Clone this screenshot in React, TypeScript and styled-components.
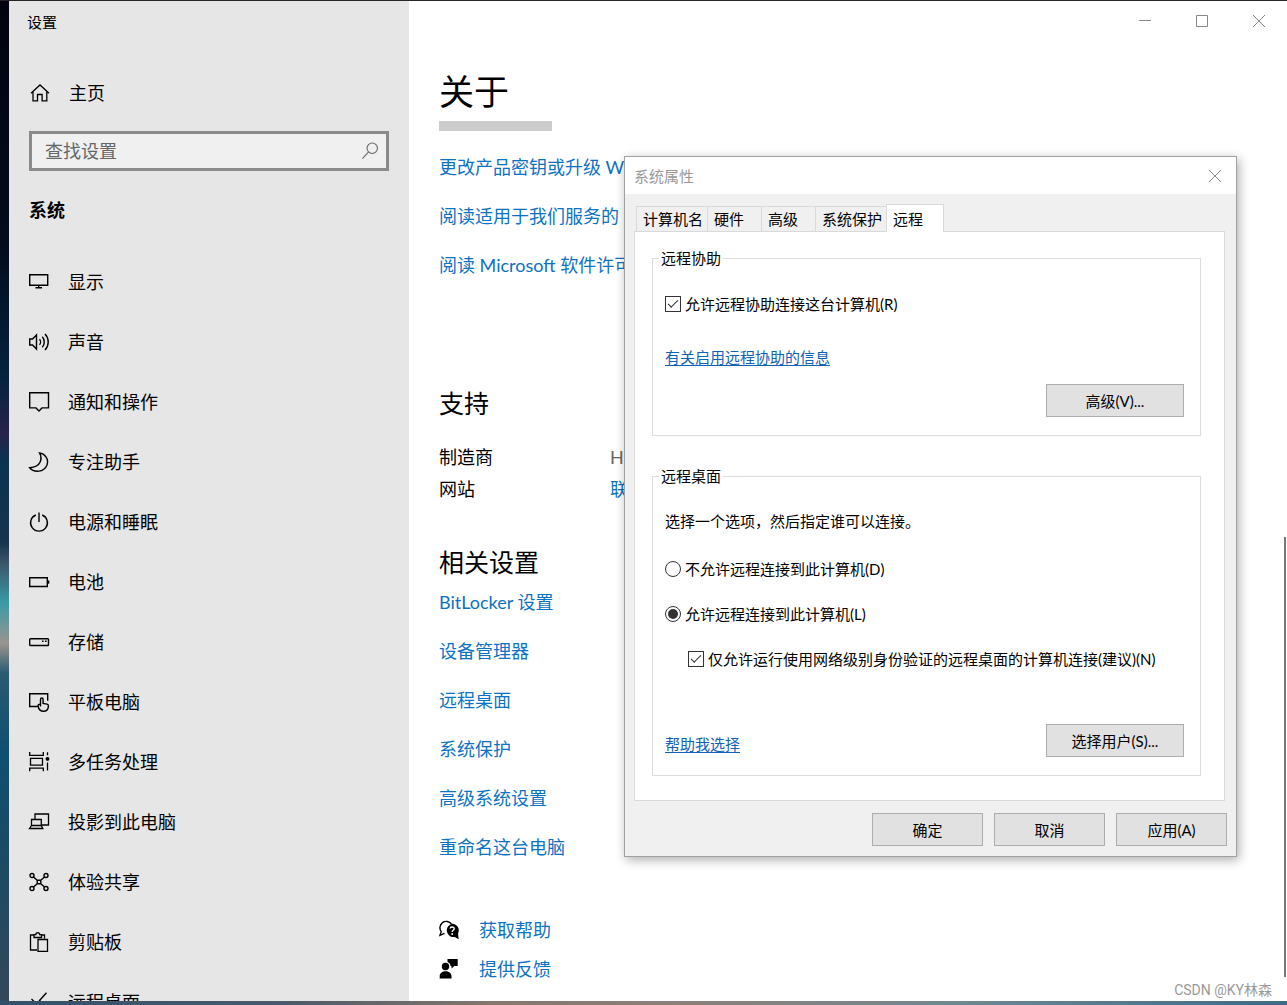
import React, { useId, useState } from "react";
import styled, { createGlobalStyle } from "styled-components";

const GlobalStyle = createGlobalStyle`
  *, *::before, *::after { box-sizing: border-box; }
  body {
    margin: 0;
    overflow: hidden;
    font-family: Lato, "Noto Sans CJK SC", sans-serif;
    color: #000;
  }
  button, input { font: inherit; color: inherit; }
  h1, h2, p, ul, dl, dd { margin: 0; padding: 0; }
  a { color: #0b72c4; text-decoration: none; }
`;

const Desktop = styled.div`
  position: relative;
  height: 100vh;
  padding: 1px 0 4px 9px;
  background:
    linear-gradient(90deg, #34506a 0%, #4a5a6a 22%, #86766c 38%, #8d8078 52%, #6f8790 75%, #3d6b88 100%) left bottom / 100% 4px no-repeat,
    linear-gradient(#2a2428, #2a2428) left top / 100% 1px no-repeat,
    linear-gradient(180deg, #02030f 0%, #020c1c 24%, #06233f 38%, #28234a 43%, #0b3350 46%, #17334d 54%, #3c5568 56%, #3a9aa5 60%, #9a9490 64%, #2a5a70 67%, #0f4f70 75%, #1d4a63 86%, #34475a 100%);
`;

const SettingsWindow = styled.div`
  display: flex;
  height: 100%;
  background: #fff;
  overflow: hidden;
`;

const Sidebar = styled.aside`
  flex: none;
  width: 400px;
  padding: 0 20px;
  background: #e6e6e6;
  overflow: hidden;
`;

const AppName = styled.p`
  height: 40px;
  margin-left: -2px;
  padding-top: 1px;
  font-size: 15px;
  line-height: 40px;
`;

const NavLink = styled.a<{ $home?: boolean }>`
  display: flex;
  align-items: center;
  gap: ${(p) => (p.$home ? 20 : 19)}px;
  height: ${(p) => (p.$home ? 48 : 60)}px;
  font-size: 18px;
  line-height: 24px;
  color: #000;
  svg { flex: none; width: 20px; height: 20px; overflow: visible; }
`;

const HomeRow = styled.div`
  padding-top: 28px;
`;

const SearchBox = styled.label`
  display: flex;
  align-items: center;
  height: 40px;
  margin-top: 14px;
  padding: 0 7px 0 13px;
  border: 3px solid #8a8a8a;
  background: #f0f0f0;
  color: #666;
  svg { width: 18px; height: 18px; }
`;

const SearchInput = styled.input`
  flex: 1;
  min-width: 0;
  padding: 0;
  border: 0;
  outline: 0;
  background: transparent;
  font-size: 18px;
  line-height: 24px;
  &::placeholder { color: #666; opacity: 1; }
`;

const Section = styled.h2`
  padding: 26px 0 29px;
  font-size: 18px;
  line-height: 26px;
  font-weight: 700;
`;

const NavList = styled.ul`
  list-style: none;
`;

const Main = styled.main`
  flex: 1;
  min-width: 0;
  display: flex;
  flex-direction: column;
`;

const Caption = styled.div`
  display: flex;
  justify-content: flex-end;
  height: 40px;
`;

const CaptionButton = styled.button`
  display: grid;
  place-items: center;
  width: 57px;
  padding: 0;
  border: 0;
  background: transparent;
  color: #888;
`;

const Page = styled.div`
  padding: 25px 30px 0;
`;

const Title = styled.h1`
  font-size: 35px;
  line-height: 50px;
  font-weight: 400;
`;

const RedactedBar = styled.div`
  width: 113px;
  height: 10px;
  margin-top: 5px;
  background: #ccc;
`;

const LinkList = styled.ul<{ $top: number }>`
  list-style: none;
  display: grid;
  gap: 25px;
  padding-top: ${(p) => p.$top}px;
  font-size: 18px;
  line-height: 24px;
  white-space: nowrap;
`;

const Heading = styled.h2<{ $top: number }>`
  padding-top: ${(p) => p.$top}px;
  font-size: 25px;
  line-height: 36px;
  font-weight: 400;
`;

const Facts = styled.dl`
  display: grid;
  grid-template-columns: 171px 1fr;
  row-gap: 8px;
  padding-top: 24px;
  font-size: 18px;
  line-height: 24px;
  dd { color: #666; }
`;

const HelpList = styled.ul`
  list-style: none;
  display: grid;
  gap: 15px;
  padding-top: 59px;
  font-size: 18px;
  line-height: 24px;
`;

const HelpLink = styled.a`
  display: flex;
  align-items: center;
  gap: 20px;
  svg { width: 20px; height: 20px; color: #000; }
`;

const ScrollThumb = styled.div`
  position: absolute;
  right: 1px;
  top: 537px;
  bottom: 28px;
  width: 2px;
  background: #777;
`;

const Watermark = styled.p`
  position: absolute;
  right: 15px;
  bottom: 5px;
  font-family: Roboto, "Noto Sans CJK SC", sans-serif;
  font-size: 14px;
  line-height: 20px;
  color: #999;
`;

const Dialog = styled.section`
  position: absolute;
  left: 624px;
  top: 156px;
  width: 613px;
  border: 1px solid #a0a0a0;
  background: #f0f0f0;
  box-shadow: 2px 3px 10px rgba(0, 0, 0, 0.32);
  font-size: 15px;
  line-height: 20px;
`;

const DialogTitle = styled.header`
  display: flex;
  justify-content: space-between;
  align-items: center;
  height: 37px;
  padding-left: 9px;
  background: #fff;
  color: #999;
`;

const CloseButton = styled.button`
  display: grid;
  place-items: center;
  width: 42px;
  height: 36px;
  padding: 0;
  border: 0;
  background: transparent;
  color: #888;
`;

const DialogBody = styled.div`
  padding: 10px 11px 10px 9px;
`;

const Tabs = styled.div`
  display: flex;
  align-items: flex-end;
  height: 27px;
  padding-left: 2px;
`;

const Tab = styled.button<{ $width: number }>`
  width: ${(p) => p.$width}px;
  height: 25px;
  padding: 0 0 0 6px;
  border: 1px solid #d9d9d9;
  border-width: 1px 0 0 1px;
  background: #f0f0f0;
  text-align: left;
  line-height: 24px;
  white-space: nowrap;
  &[aria-selected="true"] {
    position: relative;
    height: 28px;
    margin-bottom: -1px;
    border-right-width: 1px;
    background: #fff;
  }
`;

const TabPanel = styled.div`
  display: grid;
  gap: 30px;
  padding: 16px 23px 24px 17px;
  border: 1px solid #d9d9d9;
  background: #fff;
`;

const Group = styled.fieldset`
  min-width: 0;
  margin: 0;
  padding: 0 16px 18px 12px;
  border: 1px solid #dcdcdc;
`;

const Legend = styled.legend`
  margin-left: -6px;
  padding: 0 2px;
`;

const Option = styled.label<{ $top: number; $indent?: boolean }>`
  display: flex;
  align-items: center;
  gap: 4px;
  margin-top: ${(p) => p.$top}px;
  margin-left: ${(p) => (p.$indent ? 23 : 0)}px;
  white-space: nowrap;
`;

const Check = styled.input`
  appearance: none;
  flex: none;
  width: 16px;
  height: 16px;
  margin: 0;
  border: 1px solid #333;
  background: #fff;
  display: grid;
  place-items: center;
  &:checked::after {
    content: "";
    width: 10px;
    height: 5px;
    margin-bottom: 3px;
    border: solid #333;
    border-width: 0 0 1px 1px;
    transform: rotate(-45deg);
  }
`;

const Radio = styled.input`
  appearance: none;
  flex: none;
  width: 16px;
  height: 16px;
  margin: 0;
  border: 1px solid #333;
  border-radius: 50%;
  background: #fff;
  display: grid;
  place-items: center;
  &:checked::after {
    content: "";
    width: 10px;
    height: 10px;
    border-radius: 50%;
    background: #333;
  }
`;

const InfoLink = styled.a`
  color: #0f62b8;
  text-decoration: underline;
  text-underline-offset: 2px;
`;

const LinkLine = styled.p`
  margin-top: 33px;
`;

const Prompt = styled.p`
  margin-top: 25px;
`;

const PushButton = styled.button<{ $wide?: boolean }>`
  width: ${(p) => (p.$wide ? 138 : 111)}px;
  height: 33px;
  padding: 0;
  border: 1px solid #adadad;
  background: #e1e1e1;
`;

const ActionRow = styled.div<{ $top: number }>`
  display: flex;
  justify-content: space-between;
  align-items: flex-end;
  margin-top: ${(p) => p.$top}px;
  > a { line-height: 26px; }
  > button { margin-left: auto; }
`;

const Footer = styled.footer`
  display: flex;
  justify-content: flex-end;
  gap: 11px;
  padding-top: 12px;
  margin-right: -2px;
`;

const Line = ({ children, w = 1.4 }: { children: React.ReactNode; w?: number }) => (
  <svg viewBox="0 0 20 20" fill="none" stroke="currentColor" strokeWidth={w} aria-hidden="true">
    {children}
  </svg>
);

const HomeIcon = () => (
  <Line w={1.3}><path d="M2 10.200 11 2l9 8.200M4 8.800V17.800h4.500v-6.300h4.600v6.300h4.700V8.800" /></Line>
);
const SearchIcon = () => (
  <Line w={1.2}><circle cx="12.500" cy="7" r="5.800" /><path d="M8.300 11.300 1.500 18.500" /></Line>
);

const navItems: { label: string; icon: React.ReactNode }[] = [
  { label: "显示", icon: <Line><path d="M.7 2.700h18v10.600H.7zM9.700 13.300v3M6.500 15.700h6.500" /></Line> },
  { label: "声音", icon: <Line><path d="M.7 7v6h2.800l4 4V3l-4 4zM10.500 7.200c1.400 1.500 1.400 4.100 0 5.600M13.300 4.800c2.600 2.800 2.600 7.600 0 10.400M16 2c4.300 4.400 4.300 11.600 0 16" /></Line> },
  { label: "通知和操作", icon: <Line><path d="M.7.700h18.800v15.200H13l-3 3-3-3H.7z" /></Line> },
  { label: "专注助手", icon: <Line><path d="M10.500 1c3 5 2 14-9.800 14.700 4.500 5.500 14.300 4.500 17.200-2.500C20.300 7 15.500 1.500 10.500 1z" /></Line> },
  { label: "电源和睡眠", icon: <Line><path d="M10 .5v9.500M6.800 3A8.400 8.400 0 1 0 13.200 3" /></Line> },
  { label: "电池", icon: <Line><path d="M.7 5.700h17.600v8.800H.7z" /><path d="M19.300 8.500v3.200" strokeWidth="2" /></Line> },
  { label: "存储", icon: <Line><rect x=".7" y="6.700" width="18.800" height="6.800" rx=".8" /><path d="M13 9.200h1.600M16 9.200h1.600" /></Line> },
  { label: "平板电脑", icon: <Line><path d="M8.500 14.500H.7V1.700h18v7M11.500 14.500V7.500c0-2 2.600-2 2.600 0v4l4 .6c1.300.3 1.500 1 1.300 2.500-.3 2.500-1 4.700-4.700 4.700-3.500 0-5.200-2-5.600-5.400-.2-1.500 1.400-2 2.400-1" /></Line> },
  { label: "多任务处理", icon: <Line w={1.3}><path d="M.7 0v3.300h13.600V0M1.500 6.300h12v6.900h-12zM.7 19.200v-3h13.600v3M18.500.300v3M18.500 10.500v8" /><circle cx="18.500" cy="6.900" r="1.300" fill="currentColor" /></Line> },
  { label: "投影到此电脑", icon: <Line w={1.3}><path d="M6 7V2h13.500v11H13M2.500 7.500h9.800v6H2.500zM2.500 13.500l-2 3h13.300l-1.500-3" /></Line> },
  { label: "体验共享", icon: <Line><circle cx="3" cy="3.500" r="2" /><circle cx="17" cy="3.500" r="2" /><circle cx="3" cy="16.500" r="2" /><circle cx="17" cy="16.500" r="2" /><path d="M8.200 8.200h3.600v3.600H8.200zM4.500 5l3.700 3.200M15.500 5l-3.700 3.200M4.500 15l3.700-3.200M15.500 15l-3.700-3.200" /></Line> },
  { label: "剪贴板", icon: <Line w={1.3}><path d="M8 18H1.500V3H5M12 3h3.500v3.500M5 5.500V2.700h1.800C7-.2 10.500-.2 10.700 2.700h1.800v2.800zM9 7.500h9.500v11.800H9z" /></Line> },
  { label: "远程桌面", icon: <Line><path d="M2.500 7l5 5-5 5M17.500.8 10.500 8.500l7 7" /></Line> },
];

const ChatHelpIcon = () => (
  <svg viewBox="0 0 20 20" aria-hidden="true">
    <path d="M5.500 13.300 1 15.300l1.200-3.700A6 6 0 1 1 12.500 4" fill="none" stroke="currentColor" strokeWidth="1.400" />
    <path d="M13.300 3.800a6.600 6.600 0 0 1 5.700 9.700l.7 5.700-4-2.200A6.700 6.700 0 1 1 13.300 3.800z" fill="currentColor" />
    <path d="M11.200 8.500c.2-2.200 4.200-2 4 .2-.1 1.500-2 1.500-2 3.200" fill="none" stroke="#fff" strokeWidth="1.400" />
    <circle cx="13.200" cy="14" r=".9" fill="#fff" />
  </svg>
);
const FeedbackIcon = () => (
  <svg viewBox="0 0 20 20" fill="currentColor" aria-hidden="true">
    <circle cx="6.500" cy="7.500" r="3.700" />
    <path d="M.7 19.500V17c0-6.500 11.800-6.500 11.800 0v2.500zM8.500 0h10.200v7h-3.200l-3 2.600V7h-1C11.500 5 10.500 3.700 8.500 3z" />
  </svg>
);

const CrossIcon = () => (
  <svg width="14" height="14" viewBox="0 0 14 14" fill="none" stroke="currentColor" aria-hidden="true">
    <path d="M1 1l12 12M13 1 1 13" />
  </svg>
);

const tabs = [
  { label: "计算机名", width: 71 },
  { label: "硬件", width: 54 },
  { label: "高级", width: 54 },
  { label: "系统保护", width: 71 },
  { label: "远程", width: 58 },
];

function SystemProperties() {
  const [tab, setTab] = useState("远程");
  const [assist, setAssist] = useState(true);
  const [remote, setRemote] = useState(true);
  const [nla, setNla] = useState(true);
  const id = useId();

  return (
    <Dialog role="dialog" aria-labelledby={id}>
      <DialogTitle>
        <span id={id}>系统属性</span>
        <CloseButton aria-label="关闭"><CrossIcon /></CloseButton>
      </DialogTitle>
      <DialogBody>
        <Tabs role="tablist">
          {tabs.map((t) => (
            <Tab key={t.label} role="tab" $width={t.width} aria-selected={tab === t.label} onClick={() => setTab(t.label)}>
              {t.label}
            </Tab>
          ))}
        </Tabs>
        <TabPanel role="tabpanel">
          <Group>
            <Legend>远程协助</Legend>
            <Option $top={26}>
              <Check type="checkbox" checked={assist} onChange={(e) => setAssist(e.target.checked)} />
              允许远程协助连接这台计算机(R)
            </Option>
            <LinkLine><InfoLink href="#assist">有关启用远程协助的信息</InfoLink></LinkLine>
            <ActionRow $top={17}>
              <PushButton $wide>高级(V)...</PushButton>
            </ActionRow>
          </Group>
          <Group>
            <Legend>远程桌面</Legend>
            <Prompt>选择一个选项，然后指定谁可以连接。</Prompt>
            <Option $top={28}>
              <Radio type="radio" name="remote" checked={!remote} onChange={() => setRemote(false)} />
              不允许远程连接到此计算机(D)
            </Option>
            <Option $top={25}>
              <Radio type="radio" name="remote" checked={remote} onChange={() => setRemote(true)} />
              允许远程连接到此计算机(L)
            </Option>
            <Option $top={25} $indent>
              <Check type="checkbox" checked={nla} onChange={(e) => setNla(e.target.checked)} />
              仅允许运行使用网络级别身份验证的远程桌面的计算机连接(建议)(N)
            </Option>
            <ActionRow $top={55}>
              <InfoLink href="#choose">帮助我选择</InfoLink>
              <PushButton $wide>选择用户(S)...</PushButton>
            </ActionRow>
          </Group>
        </TabPanel>
        <Footer>
          <PushButton>确定</PushButton>
          <PushButton>取消</PushButton>
          <PushButton>应用(A)</PushButton>
        </Footer>
      </DialogBody>
    </Dialog>
  );
}

export default function App() {
  return (
    <>
      <GlobalStyle />
      <Desktop>
        <SettingsWindow>
          <Sidebar>
            <AppName>设置</AppName>
            <HomeRow>
              <NavLink $home href="#home"><HomeIcon />主页</NavLink>
            </HomeRow>
            <SearchBox>
              <SearchInput type="text" placeholder="查找设置" aria-label="查找设置" />
              <SearchIcon />
            </SearchBox>
            <Section>系统</Section>
            <NavList>
              {navItems.map((item) => (
                <li key={item.label}>
                  <NavLink href="#nav">{item.icon}{item.label}</NavLink>
                </li>
              ))}
            </NavList>
          </Sidebar>
          <Main>
            <Caption>
              <CaptionButton aria-label="最小化">
                <svg width="14" height="14" viewBox="0 0 14 14" stroke="currentColor" aria-hidden="true"><path d="M1 6.500h12" /></svg>
              </CaptionButton>
              <CaptionButton aria-label="最大化">
                <svg width="14" height="14" viewBox="0 0 14 14" fill="none" stroke="currentColor" aria-hidden="true"><path d="M1.500 1.500h11v11h-11z" /></svg>
              </CaptionButton>
              <CaptionButton aria-label="关闭"><CrossIcon /></CaptionButton>
            </Caption>
            <Page>
              <Title>关于</Title>
              <RedactedBar />
              <LinkList $top={24}>
                <li><a href="#key">更改产品密钥或升级 Win</a></li>
                <li><a href="#services">阅读适用于我们服务的 M</a></li>
                <li><a href="#license">阅读 Microsoft 软件许可</a></li>
              </LinkList>
              <Heading $top={108}>支持</Heading>
              <Facts>
                <dt>制造商</dt>
                <dd>HP</dd>
                <dt>网站</dt>
                <dd><a href="#support">联</a></dd>
              </Facts>
              <Heading $top={43}>相关设置</Heading>
              <LinkList $top={10}>
                <li><a href="#bitlocker">BitLocker 设置</a></li>
                <li><a href="#devices">设备管理器</a></li>
                <li><a href="#remote">远程桌面</a></li>
                <li><a href="#protection">系统保护</a></li>
                <li><a href="#advanced">高级系统设置</a></li>
                <li><a href="#rename">重命名这台电脑</a></li>
              </LinkList>
              <HelpList>
                <li><HelpLink href="#help"><ChatHelpIcon />获取帮助</HelpLink></li>
                <li><HelpLink href="#feedback"><FeedbackIcon />提供反馈</HelpLink></li>
              </HelpList>
            </Page>
          </Main>
        </SettingsWindow>
        <ScrollThumb />
        <Watermark>CSDN @KY林森</Watermark>
        <SystemProperties />
      </Desktop>
    </>
  );
}
